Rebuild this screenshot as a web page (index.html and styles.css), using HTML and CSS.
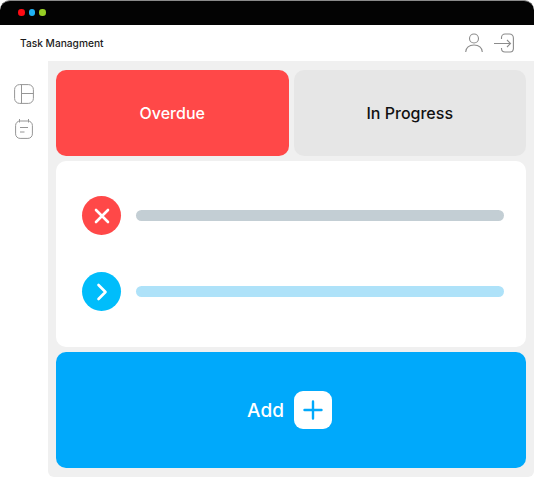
FILE: index.html
```html
<!DOCTYPE html>
<html lang="en">
<head>
    <meta charset="UTF-8">
    <meta name="viewport" content="width=device-width, initial-scale=1.0">
    <title>Task Managment</title>
    <link rel="stylesheet" href="styles.css">
</head>
<body>
    <div class="window">
        <div class="titlebar">
            <span class="dot dot-red"></span>
            <span class="dot dot-blue"></span>
            <span class="dot dot-green"></span>
        </div>

        <div class="header">
            <div class="app-name">Task Managment</div>
            <div class="header-icons">
                <svg class="icon-user" width="18" height="20" viewBox="0 0 18 20">
                    <circle cx="9" cy="5.500" r="4.500"/>
                    <path d="M.7 19c.4-4.600 3.800-7 8.300-7s7.900 2.400 8.300 7"/>
                </svg>
                <svg class="icon-login" width="20" height="20" viewBox="0 0 20 20">
                    <path d="M0 10.500h16M13 7l3.500 3.500L13 14"/>
                    <path d="M7.500 6V4.500A3.500 3.500 0 0 1 11 1h4.500A4 4 0 0 1 19.400 5v11a3.500 3.500 0 0 1-3.900 3H11a3.500 3.500 0 0 1-3.500-3.500V15"/>
                </svg>
            </div>
        </div>

        <div class="main">
            <div class="sidebar">
                <svg width="20" height="20" viewBox="0 0 20 20">
                    <rect x=".6" y=".6" width="18.800" height="18.800" rx="5"/>
                    <path d="M7.500 .6v18.800M7.500 9.500h11.900"/>
                </svg>
                <svg width="18" height="20" viewBox="0 0 18 20">
                    <rect x=".6" y="2" width="16.800" height="17.400" rx="4.500"/>
                    <path d="M4.500 0v3.500M13.500 0v3.500M5 8.500h8M5 13h4.500"/>
                </svg>
            </div>

            <div class="content">
                <div class="tabs">
                    <div class="tab tab-overdue">Overdue</div>
                    <div class="tab tab-progress">In Progress</div>
                </div>

                <div class="card">
                    <div class="task">
                        <div class="badge badge-red">
                            <svg width="16" height="16" viewBox="0 0 16 16"><path d="M2 2l12 12M14 2 2 14"/></svg>
                        </div>
                        <div class="bar bar-gray"></div>
                    </div>
                    <div class="task">
                        <div class="badge badge-blue">
                            <svg width="18" height="18" viewBox="0 0 18 18"><path d="M5.500 2l7 7-7 7"/></svg>
                        </div>
                        <div class="bar bar-blue"></div>
                    </div>
                </div>

                <div class="add">
                    <span>Add</span>
                    <div class="add-btn">
                        <svg width="20" height="20" viewBox="0 0 20 20"><path d="M10 1.500v17M1.500 10h17"/></svg>
                    </div>
                </div>
            </div>
        </div>
    </div>
</body>
</html>
```

FILE: styles.css
```css
* {
    margin: 0;
    padding: 0;
    box-sizing: border-box;
}

body {
    font-family: 'Inter', 'Liberation Sans', sans-serif;
    background: white;
    width: 534px;
    height: 478px;
    overflow: hidden;
}

.window {
    height: 477px;
    display: flex;
    flex-direction: column;
}

.titlebar {
    height: 25px;
    background: #030303;
    border-top: 1px solid #8a8a8a;
    border-radius: 10px 10px 0 0;
    display: flex;
    align-items: center;
    gap: 4px;
    padding-left: 18px;
    padding-bottom: 1px;
}

.dot {
    width: 6.500px;
    height: 6.500px;
    border-radius: 50%;
}

.dot-red { background: #ff0b14; }
.dot-blue { background: #1fb2f5; }
.dot-green { background: #97cf25; }

.header {
    height: 36px;
    display: flex;
    align-items: center;
    justify-content: space-between;
    padding: 0 20px;
}

.app-name {
    font-size: 10.200px;
    font-weight: 500;
    color: #1b1b1b;
}

.header-icons {
    display: flex;
    align-items: center;
    gap: 11px;
}

.header-icons svg {
    fill: none;
    stroke: #8c8c8c;
    stroke-width: 1.100;
}

.main {
    flex: 1;
    display: flex;
}

.sidebar {
    width: 48px;
    display: flex;
    flex-direction: column;
    align-items: center;
    gap: 15px;
    padding-top: 23px;
}

.sidebar svg {
    fill: none;
    stroke: #969696;
    stroke-width: 1;
}

.content {
    flex: 1;
    background: #f0f0f0;
    padding: 9px 8px;
    display: flex;
    flex-direction: column;
    gap: 5px;
    border-radius: 0 0 6px 6px;
}

.tabs {
    display: flex;
    gap: 5px;
    height: 86px;
}

.tab {
    flex: 1;
    border-radius: 10px;
    display: flex;
    align-items: center;
    justify-content: center;
    font-size: 16px;
    font-weight: 500;
}

.tab-overdue {
    background: #ff4848;
    color: white;
}

.tab-progress {
    background: #e6e6e6;
    color: #111;
}

.card {
    height: 186px;
    background: white;
    border-radius: 10px;
    padding: 35px 22px 0 26px;
    display: flex;
    flex-direction: column;
    gap: 37px;
}

.task {
    display: flex;
    align-items: center;
    gap: 15px;
}

.badge {
    width: 39px;
    height: 39px;
    border-radius: 50%;
    display: flex;
    align-items: center;
    justify-content: center;
}

.badge svg {
    fill: none;
    stroke: white;
    stroke-width: 2.600;
    stroke-linecap: round;
    stroke-linejoin: round;
}

.badge-red { background: #ff4848; }
.badge-blue { background: #00bdfb; }

.bar {
    flex: 1;
    height: 11px;
    border-radius: 6px;
}

.bar-gray { background: #c3ced4; }
.bar-blue { background: #aee2f9; }

.add {
    flex: 1;
    background: #00a9fb;
    border-radius: 10px;
    display: flex;
    align-items: center;
    justify-content: center;
    gap: 10px;
    padding-right: 3px;
    color: white;
    font-size: 19px;
    font-weight: 500;
}

.add-btn {
    width: 38px;
    height: 38px;
    background: white;
    border-radius: 9px;
    display: flex;
    align-items: center;
    justify-content: center;
}

.add-btn svg {
    fill: none;
    stroke: #00a9fb;
    stroke-width: 2.400;
    stroke-linecap: round;
}
```
